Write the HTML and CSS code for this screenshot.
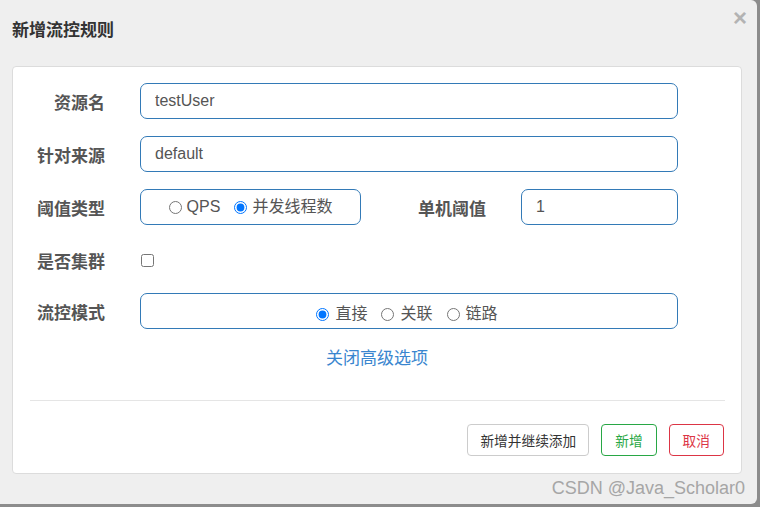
FILE: index.html
```html
<!DOCTYPE html>
<html lang="zh">
<head>
<meta charset="utf-8">
<title>新增流控规则</title>
<link rel="stylesheet" href="styles.css">
</head>
<body>
<div class="modal">
  <div class="modal-header">
    <h4 class="modal-title">新增流控规则</h4>
    <span class="close">×</span>
  </div>
  <div class="card">
    <form class="form">
      <div class="row">
        <label class="label">资源名</label>
        <input class="input input-wide" type="text" value="testUser">
      </div>
      <div class="row">
        <label class="label">针对来源</label>
        <input class="input input-wide" type="text" value="default">
      </div>
      <div class="row">
        <label class="label">阈值类型</label>
        <div class="radio-box radio-box-small">
          <label class="radio"><input type="radio" name="grade">QPS</label>
          <label class="radio"><input type="radio" name="grade" checked>并发线程数</label>
        </div>
        <label class="label">单机阈值</label>
        <input class="input input-small" type="text" value="1">
      </div>
      <div class="row row-check">
        <label class="label">是否集群</label>
        <input class="check" type="checkbox">
      </div>
      <div class="row row-mode">
        <label class="label">流控模式</label>
        <div class="radio-box radio-box-wide">
          <label class="radio radio-cn"><input type="radio" name="mode" checked>直接</label>
          <label class="radio radio-cn"><input type="radio" name="mode">关联</label>
          <label class="radio radio-cn"><input type="radio" name="mode">链路</label>
        </div>
      </div>
      <div class="toggle"><a class="link">关闭高级选项</a></div>
    </form>
    <hr class="divider">
    <div class="footer">
      <button class="btn btn-default" type="button">新增并继续添加</button>
      <button class="btn btn-success" type="button">新增</button>
      <button class="btn btn-danger" type="button">取消</button>
    </div>
  </div>
  <div class="watermark">CSDN @Java_Scholar0</div>
</div>
</body>
</html>
```

FILE: styles.css
```css
* {
  box-sizing: border-box;
}

html, body {
  margin: 0;
  padding: 0;
}

body {
  background: #8c8c8c;
  font-family: "Liberation Sans", "Noto Sans CJK SC", sans-serif;
  width: 760px;
  height: 507px;
  overflow: hidden;
}

.modal {
  position: relative;
  width: 757px;
  height: 504px;
  background: #efefef;
  border-radius: 0 6px 6px 0;
  display: flex;
  flex-direction: column;
}

.modal-header {
  height: 58px;
  display: flex;
  align-items: center;
  justify-content: space-between;
  padding: 0 10px 0 12px;
}

.modal-title {
  margin: 0;
  font-size: 17px;
  font-weight: bold;
  color: #333;
  line-height: 24px;
  font-family: "Noto Sans CJK SC", sans-serif;
}

.close {
  font-size: 24px;
  font-weight: bold;
  color: #b3b3b3;
  line-height: 24px;
  margin-top: -22px;
}

.card {
  margin: 8px 15px 0 12px;
  height: 408px;
  background: #fff;
  border: 1px solid #dcdcdc;
  border-radius: 4px;
  display: flex;
  flex-direction: column;
}

.form {
  padding-top: 16px;
}

.row {
  display: flex;
  align-items: center;
  height: 36px;
  margin-bottom: 17px;
}

.row-check {
  margin-bottom: 15px;
}

.label {
  width: 92px;
  margin-right: 35px;
  padding-top: 2px;
  text-align: right;
  font-family: "Noto Sans CJK SC", sans-serif;
  font-weight: bold;
  font-size: 17px;
  color: #555;
  line-height: 24px;
}

.input {
  height: 36px;
  border: 1px solid #337ab7;
  border-radius: 7px;
  padding: 0 14px;
  font-family: "Liberation Sans", "Noto Sans CJK SC", sans-serif;
  font-size: 16px;
  color: #555;
  outline: none;
  background: #fff;
}

.input-wide {
  width: 538px;
}

.input-small {
  width: 157px;
}

.radio-box {
  height: 36px;
  border: 1px solid #337ab7;
  border-radius: 7px;
  display: flex;
  align-items: center;
  justify-content: center;
  gap: 14px;
}

.radio-box-small {
  width: 221px;
  margin-right: 33px;
}

.radio-box-wide {
  width: 538px;
  padding-top: 6px;
  padding-right: 4px;
}

.radio {
  display: flex;
  align-items: center;
  font-family: "Liberation Sans", "Noto Sans CJK SC", sans-serif;
  font-size: 16px;
  color: #555;
  line-height: 20px;
}

.radio input {
  width: 13px;
  height: 13px;
  margin: 0 5px 0 0;
}

.radio-cn input {
  margin-right: 6px;
}

.check {
  width: 13px;
  height: 13px;
  margin: 0 0 0 1px;
}

.toggle {
  margin-top: -1px;
  text-align: center;
  line-height: 24px;
}

.link {
  font-family: "Noto Sans CJK SC", sans-serif;
  font-size: 17px;
  color: #3a86cf;
  cursor: pointer;
}

.divider {
  margin: 29px 16px 0 17px;
  border: 0;
  border-top: 1px solid #e5e5e5;
  height: 0;
}

.footer {
  display: flex;
  justify-content: flex-end;
  gap: 12px;
  margin-top: 23px;
  padding-right: 17px;
}

.btn {
  height: 32px;
  padding: 0 12px;
  border-radius: 4px;
  background: #fff;
  font-family: "Noto Sans CJK SC", sans-serif;
  font-size: 13.7px;
  line-height: 30px;
  border: 1px solid #ccc;
  color: #333;
}

.btn-success,
.btn-danger {
  padding: 0 13px;
}

.btn-success {
  border-color: #28a745;
  color: #28a745;
}

.btn-danger {
  border-color: #dc3545;
  color: #dc3545;
}

.watermark {
  position: absolute;
  right: 12px;
  bottom: 6px;
  font-family: "Liberation Sans", sans-serif;
  font-size: 18px;
  line-height: 20px;
  color: #a6a6a6;
}
```
